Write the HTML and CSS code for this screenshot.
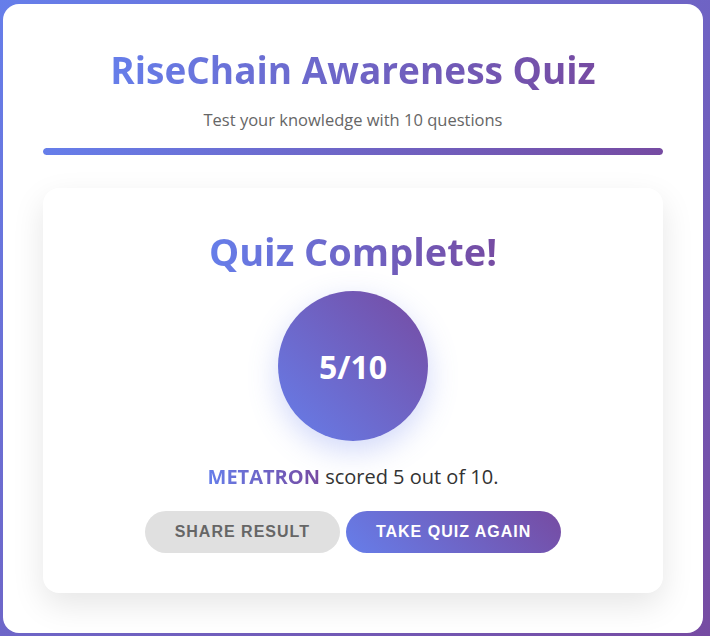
FILE: index.html
```html
<!DOCTYPE html>
<html lang="en">
<head>
<meta charset="utf-8">
<title>RiseChain Awareness Quiz</title>
<link rel="stylesheet" href="styles.css">
</head>
<body>
  <div class="container">
    <header class="header">
      <h1 class="title">RiseChain Awareness Quiz</h1>
      <p class="subtitle">Test your knowledge with 10 questions</p>
      <div class="progress"><div class="progress-fill" style="width:100%"></div></div>
    </header>
    <section class="card">
      <h2 class="complete">Quiz Complete!</h2>
      <div class="score-circle"><span class="score">5/10</span></div>
      <p class="result"><span class="name">METATRON</span> scored 5 out of 10.</p>
      <div class="actions">
        <button class="btn btn-share">Share Result</button>
        <button class="btn btn-again">Take Quiz Again</button>
      </div>
    </section>
  </div>
</body>
</html>
```
FILE: styles.css
```css
html, body {
  margin: 0;
  height: 100%;
}
body {
  background: linear-gradient(135deg, #667eea 0%, #764ba2 100%);
  padding: 4px 0 0 3px;
  box-sizing: border-box;
  font-family: "Open Sans", "Noto Sans", sans-serif;
}
.container {
  width: 700px;
  height: 629px;
  box-sizing: border-box;
  background: #fff;
  border-radius: 16px;
  padding: 40px;
  display: flex;
  flex-direction: column;
}
.header {
  text-align: center;
}
.title {
  margin: 0;
  font-size: 37px;
  font-weight: 700;
  line-height: 52px;
  background: linear-gradient(90deg, #667eea, #764ba2);
  -webkit-background-clip: text;
  background-clip: text;
  color: transparent;
  display: inline-block;
}
.subtitle {
  margin: 14px 0 0;
  font-size: 16.5px;
  line-height: 20px;
  color: #666;
}
.progress {
  margin-top: 18px;
  height: 7px;
  border-radius: 4px;
  background: #eee;
  overflow: hidden;
}
.progress-fill {
  height: 100%;
  background: linear-gradient(90deg, #667eea, #764ba2);
  border-radius: 4px;
}
.card {
  margin-top: 33px;
  flex: 1;
  background: #fff;
  border-radius: 16px;
  box-shadow: 0 12px 32px rgba(0, 0, 0, 0.1);
  padding: 37px 40px 40px;
  display: flex;
  flex-direction: column;
  align-items: center;
}
.complete {
  margin: 0;
  font-size: 38px;
  font-weight: 700;
  line-height: 52px;
  background: linear-gradient(90deg, #667eea, #764ba2);
  -webkit-background-clip: text;
  background-clip: text;
  color: transparent;
}
.score-circle {
  margin-top: 14px;
  width: 150px;
  height: 150px;
  border-radius: 50%;
  background: linear-gradient(45deg, #667eea, #764ba2);
  box-shadow: 0 10px 30px rgba(102, 126, 234, 0.3);
  display: flex;
  align-items: center;
  justify-content: center;
}
.score {
  color: #fff;
  font-size: 32px;
  font-weight: 700;
}
.result {
  margin: 23px 0 0;
  font-size: 20px;
  line-height: 26px;
  color: #333;
}
.name {
  font-weight: 700;
  background: linear-gradient(90deg, #667eea, #764ba2);
  -webkit-background-clip: text;
  background-clip: text;
  color: transparent;
}
.actions {
  margin-top: 21px;
  display: flex;
  gap: 6px;
}
.btn {
  font-family: "Liberation Sans", Arial, sans-serif;
  font-size: 16px;
  font-weight: 700;
  text-transform: uppercase;
  letter-spacing: 1px;
  border: none;
  border-radius: 21px;
  height: 42px;
  padding: 0 30px;
  cursor: pointer;
}
.btn-share {
  background: #e0e0e0;
  color: #666;
}
.btn-again {
  background: linear-gradient(45deg, #667eea, #764ba2);
  color: #fff;
}
```
